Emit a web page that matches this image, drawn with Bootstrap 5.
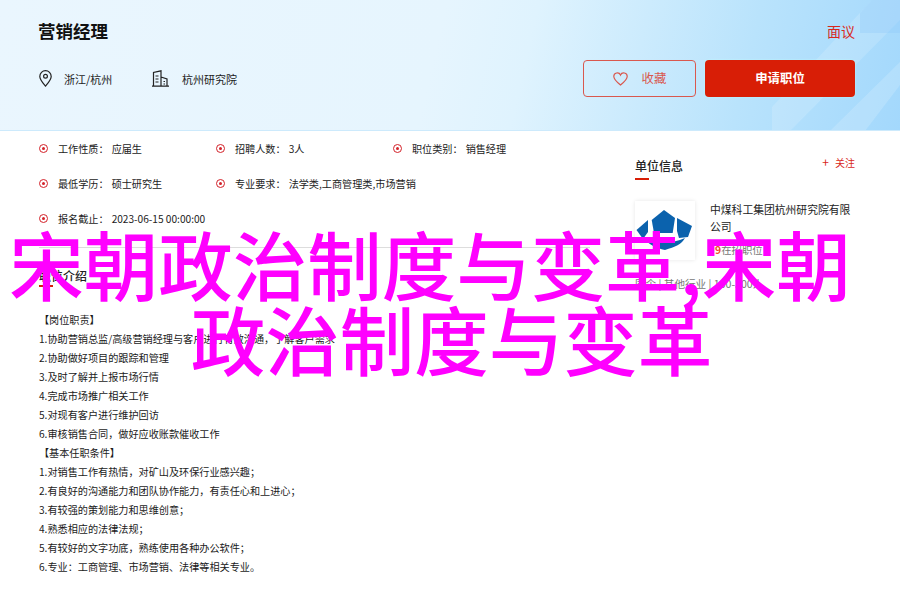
<!DOCTYPE html>
<html lang="zh-CN">
<head>
<meta charset="utf-8">
<title>营销经理</title>
<link rel="stylesheet" href="https://cdn.jsdelivr.net/npm/bootstrap@5.3.0/dist/css/bootstrap.min.css">
<style>
html,body{height:589px;overflow:hidden}
body{position:relative;background:#fff;color:#1a1a1a;font-family:"Noto Sans CJK SC","Liberation Sans",sans-serif;font-size:10.15px}
.hero{position:relative;height:131px;padding:0 45px 0 39px;overflow:hidden;background:linear-gradient(103deg,#eaf6fe 0%,#e6f5fe 48%,#dff3fe 58%,#b9e3fc 82%,#a3d8fc 100%);border-bottom:1px solid #cdeafc}
.hero-deco{position:absolute;right:0;top:0;width:250px;height:131px}
.hero-in{position:relative}
.job-title{font-size:17.5px;font-weight:700;color:#111;line-height:24px;margin:0 0 0 -1px}
.pay{font-size:14px;color:#d9281c;line-height:20px}
.top-row{padding-top:19px}
.meta-row{margin-top:17px;align-items:center}
.meta-txt{font-size:11px;color:#222;line-height:16px}
.meta-one{width:88px}
.pin-ic{width:13px;height:17px;margin-right:12px}
.bld-ic{width:17px;height:17px;margin-right:13px}
.btn-fav,.btn-go{height:37px;font-size:12.4px;padding:0;border-radius:4px;display:flex;align-items:center;justify-content:center}
.btn-fav{width:113px;border:1px solid #d9584e;color:#d9584e;background:transparent}
.btn-fav svg{width:15px;height:14px;margin-right:14px}
.btn-fav:hover{color:#d9584e;border-color:#d9584e}
.btn-go{width:150px;margin-left:9px;background:#d81e06;color:#fff;font-weight:700;border:0;box-shadow:0 0 2px #bff}
.btn-go:hover{background:#d81e06;color:#fff}
.main-wrap{padding-left:39px}
.left-col{width:551px}
.right-col{width:220px;margin-left:45px}
.facts{display:grid;grid-template-columns:177px 177px 177px;grid-auto-rows:35px}
.fact{display:flex;align-items:center;white-space:nowrap;color:#222}
.dot{width:9px;height:9px;margin-right:10px;border:1.5px solid #d3222a;border-radius:50%;flex:none;display:flex;align-items:center;justify-content:center}
.dot::after{content:"";width:3.5px;height:3.5px;border-radius:50%;background:#d3222a}
.fact-k{margin-right:3px}
.split{border-top:1px solid #ddd;margin:11px 0 0}
.sec-title{font-size:12px;line-height:18px;color:#222;margin:0;display:inline-block}
.sec-bar{width:14px;height:2px;background:#d81e06;display:block}
.intro-head{margin-top:19px}
.desc{margin-top:23px;line-height:19px;color:#1a1a1a}
.desc p{margin:0;white-space:nowrap}
.side-head{padding-top:26px}
.follow{font-size:10px;color:#d9281c;line-height:18px;margin-top:-4px}
.plus{color:#d9281c;margin-right:6px;font-size:12px}
.side-bar{margin-top:3px}
.co{margin-top:21px}
.logo-box{width:60px;height:59px;box-shadow:0 0 4px rgba(0,0,0,.1);background:#fff;flex:none}
.logo-box svg{width:60px;height:59px;display:block}
.co-txt{margin-left:15px;width:145px}
.co-name{font-size:10.8px;line-height:17px;color:#222;margin:0}
.co-open{font-size:10.4px;color:#777;line-height:14px;margin-top:8px;padding-left:5px}
.co-open b{color:#f04a2a;font-weight:700}
.co-tags{margin-top:17px;color:#777;font-size:10.6px;line-height:14px;white-space:nowrap}
.stamp{position:absolute;left:0;top:225px;width:900px;text-align:center;color:#f0f;font-size:74.5px;line-height:75px;font-weight:500;white-space:nowrap}
.stamp span{display:block}
.stamp-a{margin-right:40px}
.stamp-b{margin-left:3px}
</style>
</head>
<body>
<header class="hero">
  <svg class="hero-deco" viewBox="0 0 250 131" aria-hidden="true">
    <polygon points="122,107 222,0 250,0 250,20 140,131 122,131" fill="#fff" opacity=".15"/>
    <polygon points="180,131 250,62 250,85 215,131" fill="#fff" opacity=".16"/>
    <polygon points="210,13 222,0 250,0 250,33 210,33" fill="#8cc8fa" opacity=".3"/>
  </svg>
  <div class="hero-in">
    <div class="top-row d-flex justify-content-between align-items-center">
      <h1 class="job-title">营销经理</h1>
      <span class="pay">面议</span>
    </div>
    <div class="d-flex justify-content-between meta-row">
      <div class="d-flex align-items-center">
        <svg class="pin-ic" viewBox="0 0 13 17" fill="none" stroke="#222" stroke-width="1.2"><path d="M6.5 16C3.5 12.5 .8 9.6 .8 6.4a5.7 5.7 0 0 1 11.4 0C12.2 9.6 9.5 12.5 6.5 16z"/><circle cx="6.5" cy="6.3" r="1.9"/></svg>
        <span class="meta-txt meta-one">浙江/杭州</span>
        <svg class="bld-ic" viewBox="0 0 17 17" fill="none" stroke="#222" stroke-width="1.2"><path d="M0 16.2h17M1.5 16V2.5L9 .8V16M9 7l6 2v7"/><path d="M3.5 6h3M3.5 9h3M3.5 12h3M11.5 11.5h1.5M11.5 14h1.5"/></svg>
        <span class="meta-txt">杭州研究院</span>
      </div>
      <div class="d-flex">
        <a class="btn btn-fav" href="#"><svg viewBox="0 0 15 14" fill="none" stroke="#d9584e" stroke-width="1.2"><path d="M7.5 13C3.5 9.8.8 7.5.8 4.5A3.5 3.5 0 0 1 7.5 3a3.5 3.5 0 0 1 6.7 1.5c0 3-2.7 5.3-6.7 8.5z"/></svg>收藏</a>
        <a class="btn btn-go" href="#">申请职位</a>
      </div>
    </div>
  </div>
</header>
<main class="main-wrap d-flex">
  <section class="left-col">
    <div class="facts">
      <div class="fact"><i class="dot"></i><span class="fact-k">工作性质：</span>应届生</div>
      <div class="fact"><i class="dot"></i><span class="fact-k">招聘人数：</span>3人</div>
      <div class="fact"><i class="dot"></i><span class="fact-k">职位类别：</span>销售经理</div>
      <div class="fact"><i class="dot"></i><span class="fact-k">最低学历：</span>硕士研究生</div>
      <div class="fact"><i class="dot"></i><span class="fact-k">专业要求：</span>法学类,工商管理类,市场营销</div>
      <div class="fact"></div>
      <div class="fact"><i class="dot"></i><span class="fact-k">报名截止：</span>2023-06-15 00:00:00</div>
    </div>
    <hr class="split opacity-100">
    <div class="intro-head">
      <h2 class="sec-title">职位介绍</h2>
      <i class="sec-bar"></i>
    </div>
    <div class="desc">
      <p>【岗位职责】</p>
      <p>1.协助营销总监/高级营销经理与客户进行有效沟通，了解客户需求</p>
      <p>2.协助做好项目的跟踪和管理</p>
      <p>3.及时了解并上报市场行情</p>
      <p>4.完成市场推广相关工作</p>
      <p>5.对现有客户进行维护回访</p>
      <p>6.审核销售合同，做好应收账款催收工作</p>
      <p>【基本任职条件】</p>
      <p>1.对销售工作有热情，对矿山及环保行业感兴趣；</p>
      <p>2.有良好的沟通能力和团队协作能力，有责任心和上进心；</p>
      <p>3.有较强的策划能力和思维创意；</p>
      <p>4.熟悉相应的法律法规；</p>
      <p>5.有较好的文字功底，熟练使用各种办公软件；</p>
      <p>6.专业：工商管理、市场营销、法律等相关专业。</p>
    </div>
  </section>
  <aside class="right-col">
    <div class="side-head d-flex justify-content-between">
      <div>
        <h2 class="sec-title">单位信息</h2>
        <i class="sec-bar side-bar"></i>
      </div>
      <a class="follow text-decoration-none" href="#"><span class="plus">+</span>关注</a>
    </div>
    <div class="co d-flex">
      <div class="logo-box">
        <svg viewBox="0 0 60 59" aria-hidden="true" fill="#0b62ad">
          <path d="M29 9l11 8-2.300 15H19L16.700 19z"/>
          <path d="M13 19L1.500 29l6.500 9 5-7z"/>
          <path d="M42 17l15 8-4 11-9 1-2-7z"/>
          <path d="M10 38c8 5 28 5 40-1-3 6-10 9-20 12-9-2-16-5-20-11z"/>
        </svg>
      </div>
      <div class="co-txt">
        <p class="co-name">中煤科工集团杭州研究院有限公司</p>
        <div class="co-open"><b>9</b>在招职位</div>
      </div>
    </div>
    <div class="co-tags">国企 | 其他行业 | 100-300人</div>
  </aside>
</main>
<div class="stamp"><span class="stamp-a">宋朝政治制度与变革,宋朝</span><span class="stamp-b">政治制度与变革</span></div>
<script src="https://cdn.jsdelivr.net/npm/bootstrap@5.3.0/dist/js/bootstrap.bundle.min.js"></script>
</body>
</html>
